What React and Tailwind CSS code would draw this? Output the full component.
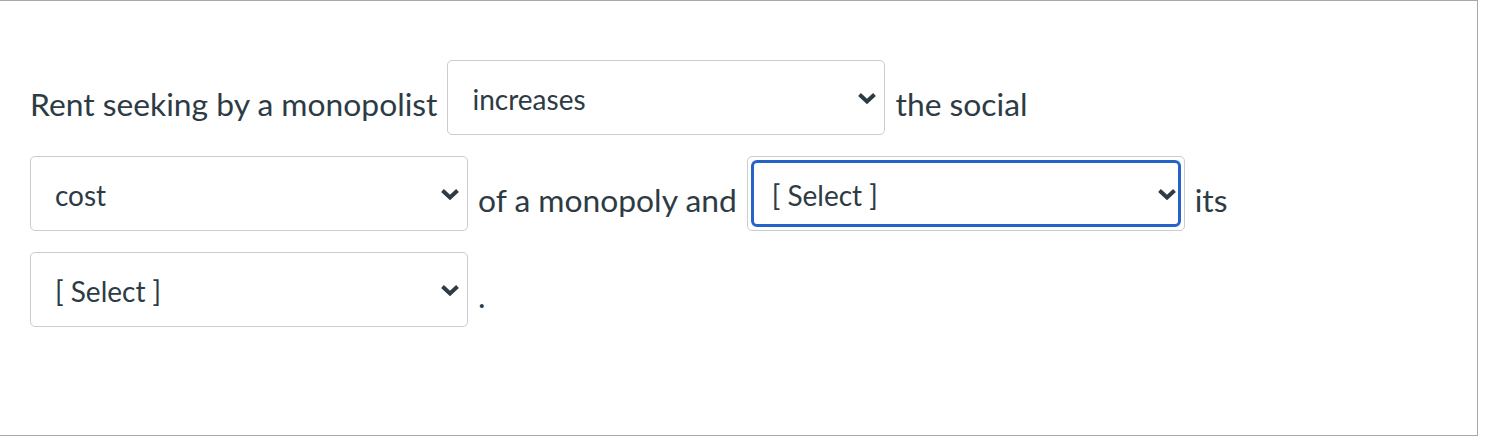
import { useState } from "react";

function Chevron() {
  return (
    <svg
      className="pointer-events-none absolute right-[8px] top-1/2 -translate-y-1/2"
      width="20"
      height="12"
      viewBox="0 0 20 12"
      fill="none"
    >
      <path d="M2.5 2.5 L10 9.5 L17.5 2.5" stroke="#2d3b45" strokeWidth="4" strokeLinejoin="miter" />
    </svg>
  );
}

function Dropdown({ value, options, onChange, focused }) {
  return (
    <div className="relative h-[75px] w-[438px] shrink-0">
      <select
        value={value}
        onChange={(e) => onChange(e.target.value)}
        className="h-full w-full appearance-none rounded-[5px] border border-[#c7cdd1] bg-white pl-[24px] pr-[40px] pt-[2px] text-[28px] text-[#2d3b45] outline-none"
      >
        {options.map((o) => (
          <option key={o} value={o}>
            {o}
          </option>
        ))}
      </select>
      {focused && (
        <div className="pointer-events-none absolute inset-[4px] rounded-[6px] border-[3px] border-[#2563c9]" />
      )}
      <Chevron />
    </div>
  );
}

export default function App() {
  const [form, setForm] = useState({
    a: "increases",
    b: "cost",
    c: "[ Select ]",
    d: "[ Select ]",
  });

  const set = (k) => (v) => setForm({ ...form, [k]: v });

  return (
    <div
      className="h-[436px] w-[1478px] border-b border-r border-t border-[#a9a9a9] bg-white pl-[30px] pr-[60px] pt-[59px] text-[#2d3b45]"
      style={{ fontFamily: "Lato, 'Liberation Sans', sans-serif" }}
    >
      <div className="flex flex-wrap items-center gap-x-[10px] gap-y-[21px] text-[31.8px]">
        <span className="pt-[14px]">Rent seeking by a monopolist</span>
        <Dropdown value={form.a} options={["[ Select ]", "increases", "decreases"]} onChange={set("a")} />
        <span className="pt-[14px]">the social</span>
        <Dropdown value={form.b} options={["[ Select ]", "cost", "benefit"]} onChange={set("b")} />
        <span className="pt-[14px]">of a monopoly and</span>
        <Dropdown value={form.c} options={["[ Select ]", "increases", "decreases"]} onChange={set("c")} focused />
        <span className="pt-[14px]">its</span>
        <Dropdown value={form.d} options={["[ Select ]", "profit", "output"]} onChange={set("d")} />
        <span className="pt-[14px]">.</span>
      </div>
    </div>
  );
}
